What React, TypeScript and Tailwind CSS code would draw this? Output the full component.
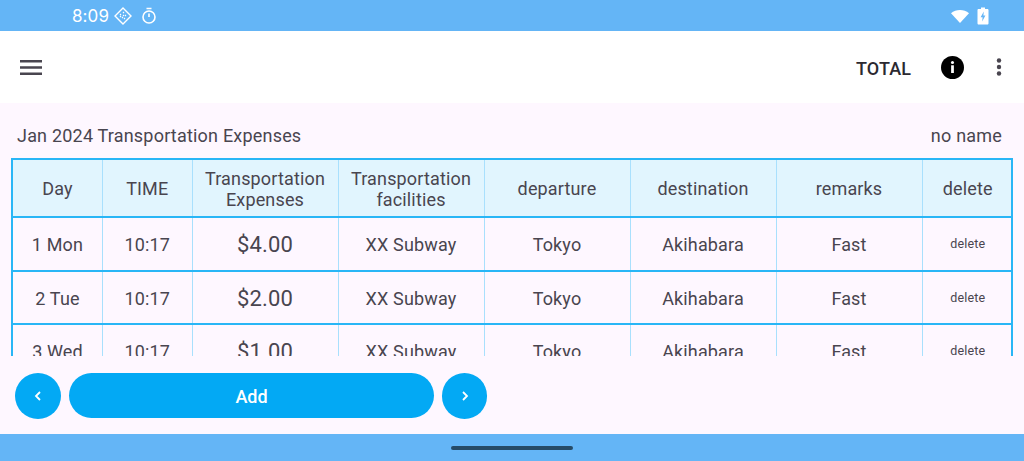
import React from "react";

const cols = ["w-[90px]", "w-[89.5px]", "w-[146px]", "w-[146px]", "w-[146px]", "w-[146px]", "w-[146px]", "w-[90.5px]"];

function Cell({ i, className = "", children }: { i: number; className?: string; children: React.ReactNode }) {
  return (
    <div className={`${cols[i]} shrink-0 h-full flex items-center justify-center text-center border-r border-[#a9e0fd] last:border-r-0 ${className}`}>
      {children}
    </div>
  );
}

const head = ["Day", "TIME", "Transportation Expenses", "Transportation facilities", "departure", "destination", "remarks", "delete"];
const rows = [
  ["1 Mon", "$4.00"],
  ["2 Tue", "$2.00"],
  ["3 Wed", "$1.00"],
];

export default function App() {
  return (
    <div className="w-[1024px] h-[461px] overflow-hidden flex flex-col bg-[#fef7ff] text-[#49454f]" style={{ fontFamily: "Roboto, sans-serif" }}>
      <div className="h-[31px] shrink-0 bg-[#64b5f6] flex items-center pl-[72px] pr-[35px] text-white">
        <span className="text-[17px] leading-none tracking-[0.1px] mt-[1px]" style={{ fontFamily: "Inter, Roboto, sans-serif", fontWeight: 400 }}>8:09</span>
        <svg width="18" height="18" viewBox="0 0 18 18" className="ml-[5px]" fill="none" stroke="white">
          <path d="M9 1 L17 9 L9 17 L1 9 Z" strokeWidth="1.4" />
          <path d="M6 7 L7 8 M9 5 L10 6 M11 8 L12 9 M8 10 L9 11 M6 10 L7 9 M10 12 L11 11 M9 8 L10 9" strokeWidth="1.1" />
        </svg>
        <svg width="18" height="18" viewBox="0 0 18 18" className="ml-[8px]" fill="none" stroke="white" strokeWidth="1.6">
          <circle cx="9" cy="10" r="6" />
          <path d="M6.5 1.5 H11.5 M9 6.5 V10" />
        </svg>
        <div className="flex-1" />
        <svg width="20" height="16" viewBox="0 0 20 16" fill="white">
          <path d="M1 5.2 C6 0.8 14 0.8 19 5.2 L10 15 Z" />
        </svg>
        <svg width="12" height="18" viewBox="0 0 12 18" className="ml-[7px]">
          <path d="M4 0.5 H8 V2 H10.5 C11 2 11.5 2.5 11.5 3 V16.5 C11.5 17 11 17.5 10.5 17.5 H1.5 C1 17.5 0.5 17 0.5 16.5 V3 C0.5 2.5 1 2 1.5 2 H4 Z" fill="white" />
          <path d="M6.8 4.5 L3.6 10.3 H5.6 L5.2 14.5 L8.4 8.6 H6.4 Z" fill="#64b5f6" />
        </svg>
      </div>

      <div className="h-[72px] shrink-0 bg-white flex items-center pl-[20px] text-[#2b2930]">
        <svg width="22" height="15" viewBox="0 0 22 15" fill="#49454f">
          <rect x="0" y="0" width="22" height="2.5" />
          <rect x="0" y="6.25" width="22" height="2.5" />
          <rect x="0" y="12.5" width="22" height="2.5" />
        </svg>
        <div className="flex-1" />
        <span className="text-[18px] font-medium tracking-[0.1px] mt-[2px]">TOTAL</span>
        <div className="ml-[30px] w-[23px] h-[23px] rounded-full bg-black flex items-center justify-center">
          <svg width="5" height="12" viewBox="0 0 5 14" fill="white">
            <circle cx="2.5" cy="1.8" r="1.8" />
            <rect x="0.9" y="5" width="3.2" height="9" />
          </svg>
        </div>
        <svg width="6" height="18" viewBox="0 0 6 18" className="ml-[32px] mr-[22px]" fill="#49454f">
          <circle cx="3" cy="2.5" r="2.2" />
          <circle cx="3" cy="9" r="2.2" />
          <circle cx="3" cy="15.5" r="2.2" />
        </svg>
      </div>

      <div className="flex-1 min-h-0 flex flex-col">
        <div className="h-[55px] shrink-0 flex justify-between items-center pl-[17px] pr-[22px] text-[18px] tracking-[0.2px] pt-[9px]">
          <span>Jan 2024 Transportation Expenses</span>
          <span>no name</span>
        </div>

        <div className="mx-[11px] h-[198px] shrink-0 overflow-hidden">
          <div className="border-2 border-[#29b6f6] border-b-0">
            <div className="h-[56px] flex bg-[#e1f5fe] text-[18px] leading-[21px] tracking-[0.15px]">
              {head.map((h, i) => (
                <Cell key={h} i={i} className="px-1 pt-[1px]">{h}</Cell>
              ))}
            </div>
            {rows.map(([d, p]) => (
              <div key={d} className="h-[53.5px] flex border-t-2 border-[#29b6f6] text-[18px] tracking-[0.15px]">
                <Cell i={0} className="pt-[2px]">{d}</Cell>
                <Cell i={1} className="pt-[2px]">10:17</Cell>
                <Cell i={2} className="pt-[2px] text-[22px]">{p}</Cell>
                <Cell i={3} className="pt-[2px]">XX Subway</Cell>
                <Cell i={4} className="pt-[2px]">Tokyo</Cell>
                <Cell i={5} className="pt-[2px]">Akihabara</Cell>
                <Cell i={6} className="pt-[2px]">Fast</Cell>
                <Cell i={7} className="pt-[2px] text-[12.5px]">delete</Cell>
              </div>
            ))}
          </div>
        </div>

        <div className="flex-1 flex items-center pl-[15px] pt-[1px]">
          <button className="w-[46px] h-[46px] rounded-full bg-[#03a9f4] flex items-center justify-center">
            <svg width="8" height="12" viewBox="0 0 8 12" fill="none" stroke="white" strokeWidth="1.8"><path d="M6 2 L2 6 L6 10" /></svg>
          </button>
          <button className="ml-[8px] w-[365px] h-[45px] rounded-full bg-[#03a9f4] text-white text-[18px] font-medium pt-[1px]">Add</button>
          <button className="ml-[8px] w-[45px] h-[46px] rounded-full bg-[#03a9f4] flex items-center justify-center">
            <svg width="8" height="12" viewBox="0 0 8 12" fill="none" stroke="white" strokeWidth="1.8"><path d="M2 2 L6 6 L2 10" /></svg>
          </button>
        </div>
      </div>

      <div className="h-[27px] shrink-0 bg-[#64b5f6] flex justify-center pt-[12px]">
        <div className="w-[122px] h-[4px] rounded-full bg-[#264b67]" />
      </div>
    </div>
  );
}
